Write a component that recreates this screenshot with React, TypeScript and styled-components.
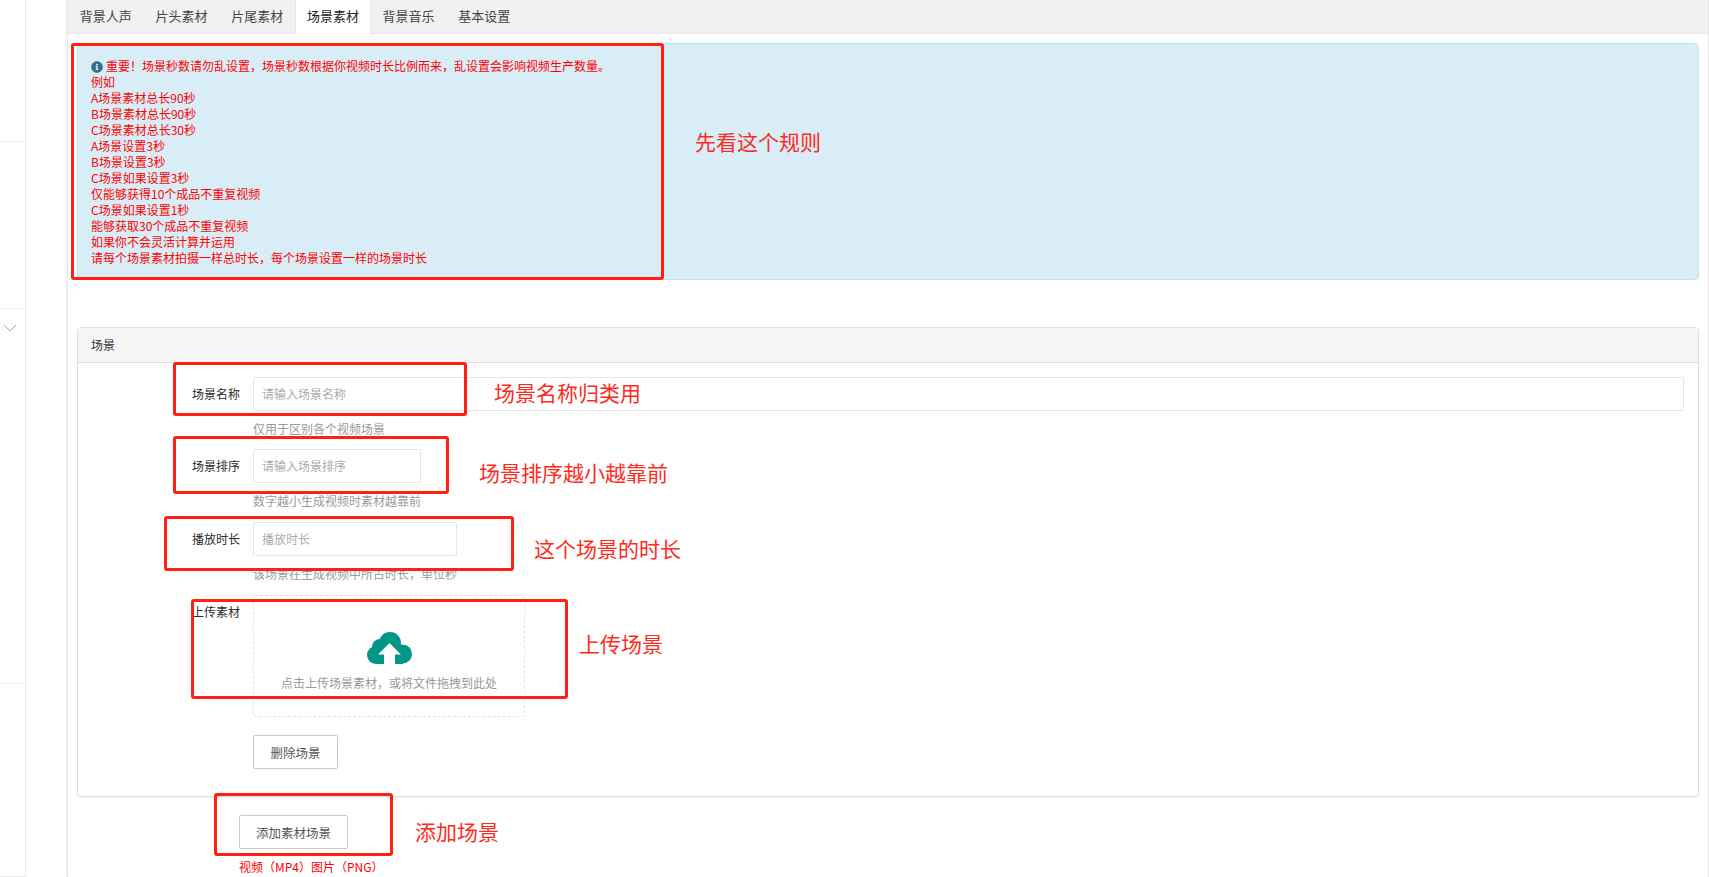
import React from "react";
import styled, { createGlobalStyle } from "styled-components";
import { FaInfoCircle } from "react-icons/fa";

const GlobalStyle = createGlobalStyle`
  html, body {
    margin: 0;
    padding: 0;
    height: 100%;
    overflow: hidden;
    background: #fff;
    font-family: "Noto Sans CJK SC", "Liberation Sans", sans-serif;
    font-size: 12px;
    color: #333;
  }
  * {
    box-sizing: border-box;
  }
`;

const Page = styled.div`
  position: relative;
  display: flex;
  width: 1709px;
  height: 877px;
  overflow: hidden;
`;

const SideRail = styled.div`
  display: flex;
  flex-direction: column;
  width: 26px;
  flex-shrink: 0;
  border-right: 1px solid #e8e8e8;
`;

const RailSection = styled.div<{ $height?: number }>`
  display: flex;
  justify-content: flex-start;
  padding-left: 3px;
  height: ${(p) => (p.$height ? `${p.$height}px` : "auto")};
  flex: ${(p) => (p.$height ? "none" : "1")};
  border-bottom: 1px solid #ececec;
  color: #aaa;
`;

const Gutter = styled.div`
  width: 41px;
  flex-shrink: 0;
`;

const Main = styled.div`
  flex: 1;
  min-width: 0;
  border-left: 1px solid #e6e6e6;
  border-right: 1px solid #e6e6e6;
  box-shadow: -1px 0 2px rgba(0, 0, 0, 0.05);
`;

const TabBar = styled.div`
  display: flex;
  height: 34px;
  background: #f1f1f1;
  border-bottom: 1px solid #e6e6e6;
`;

const Tab = styled.div<{ $active?: boolean }>`
  width: 75.7px;
  height: ${(p) => (p.$active ? "34px" : "33px")};
  line-height: 32px;
  text-align: center;
  font-size: 13px;
  color: ${(p) => (p.$active ? "#222" : "#444")};
  background: ${(p) => (p.$active ? "#fff" : "transparent")};
  border-left: 1px solid ${(p) => (p.$active ? "#e6e6e6" : "transparent")};
  border-right: 1px solid ${(p) => (p.$active ? "#e6e6e6" : "transparent")};
`;

const Content = styled.div`
  padding: 9px 9px 0 9px;
`;

const Alert = styled.div`
  height: 237px;
  padding: 14px 13px;
  margin-bottom: 47px;
  background: #d9edf7;
  border: 1px solid #bce8f1;
  border-radius: 4px;
  color: #f00;
  line-height: 16px;
  font-size: 12px;
`;

const InfoIcon = styled(FaInfoCircle)`
  width: 12px;
  height: 12px;
  margin-right: 3px;
  vertical-align: -2px;
  color: #31708f;
`;

const Panel = styled.div`
  height: 470px;
  border: 1px solid #ddd;
  border-radius: 4px;
  box-shadow: 0 1px 1px rgba(0, 0, 0, 0.05);
`;

const PanelHeader = styled.div`
  height: 35px;
  padding: 0 13px;
  line-height: 33px;
  background: #f5f5f5;
  border-bottom: 1px solid #ddd;
  color: #333;
`;

const PanelBody = styled.div`
  display: flex;
  flex-direction: column;
  padding: 14px 14px 0 0;
`;

const FormRow = styled.div<{ $gap?: number }>`
  display: grid;
  grid-template-columns: 162px 1fr;
  column-gap: 13px;
  margin-bottom: ${(p) => p.$gap ?? 12}px;
`;

const Label = styled.div`
  line-height: 34px;
  text-align: right;
  color: #2a2a2a;
`;

const Input = styled.input<{ $width?: number }>`
  display: block;
  width: ${(p) => (p.$width ? `${p.$width}px` : "100%")};
  height: 34px;
  padding: 0 8px 2px;
  border: 1px solid #e6e6e6;
  border-radius: 2px;
  outline: none;
  font-family: inherit;
  font-size: 12px;
  &::placeholder {
    color: #aaa;
  }
`;

const Help = styled.div`
  margin-top: 9px;
  line-height: 18px;
  color: #999;
`;

const UploadArea = styled.div`
  display: flex;
  flex-direction: column;
  align-items: center;
  width: 272px;
  height: 122px;
  padding-top: 36px;
  border: 1px dashed #e2e2e2;
  border-radius: 2px;
  color: #999;
`;

const UploadText = styled.div`
  margin-top: 9px;
  line-height: 18px;
`;

const Button = styled.button<{ $width: number }>`
  display: block;
  width: ${(p) => p.$width}px;
  height: 34px;
  padding: 0;
  background: #fff;
  border: 1px solid #c9c9c9;
  border-radius: 2px;
  font-family: inherit;
  font-size: 12.5px;
  color: #555;
`;

const Footer = styled.div`
  margin: 18px 0 0 162px;
`;

const Caption = styled.div`
  margin-top: 9px;
  line-height: 18px;
  color: #f00;
`;

const RedBox = styled.div<{ $x: number; $y: number; $w: number; $h: number }>`
  position: absolute;
  left: ${(p) => p.$x}px;
  top: ${(p) => p.$y}px;
  width: ${(p) => p.$w}px;
  height: ${(p) => p.$h}px;
  border: 3px solid #ff2013;
  border-radius: 3px;
  pointer-events: none;
`;

const Note = styled.div<{ $x: number; $y: number }>`
  position: absolute;
  left: ${(p) => p.$x}px;
  top: ${(p) => p.$y}px;
  font-size: 21px;
  line-height: 30px;
  color: #ff2a1c;
  white-space: nowrap;
`;

const tabs = ["背景人声", "片头素材", "片尾素材", "场景素材", "背景音乐", "基本设置"];

const ruleLines = [
  "例如",
  "A场景素材总长90秒",
  "B场景素材总长90秒",
  "C场景素材总长30秒",
  "A场景设置3秒",
  "B场景设置3秒",
  "C场景如果设置3秒",
  "仅能够获得10个成品不重复视频",
  "C场景如果设置1秒",
  "能够获取30个成品不重复视频",
  "如果你不会灵活计算并运用",
  "请每个场景素材拍摄一样总时长，每个场景设置一样的场景时长",
];

const redBoxes = [
  { x: 71, y: 43, w: 593, h: 237 },
  { x: 173, y: 362, w: 294, h: 54 },
  { x: 173, y: 436, w: 276, h: 58 },
  { x: 164, y: 516, w: 350, h: 55 },
  { x: 191, y: 599, w: 377, h: 100 },
  { x: 214, y: 793, w: 179, h: 63 },
];

const notes = [
  { x: 695, y: 126, text: "先看这个规则" },
  { x: 494, y: 377, text: "场景名称归类用" },
  { x: 479, y: 457, text: "场景排序越小越靠前" },
  { x: 534, y: 533, text: "这个场景的时长" },
  { x: 579, y: 628, text: "上传场景" },
  { x: 415, y: 816, text: "添加场景" },
];

function Chevron() {
  return (
    <svg width="14" height="8" viewBox="0 0 14 8" style={{ marginTop: 15 }}>
      <path d="M1 1l6 6 6-6" fill="none" stroke="#aaa" strokeWidth="1" />
    </svg>
  );
}

function CloudIcon() {
  return (
    <svg width="45" height="33" viewBox="0 0 45 33">
      <g fill="#009688">
        <circle cx="9" cy="23" r="9" />
        <circle cx="13" cy="15" r="8" />
        <circle cx="23" cy="11" r="11" />
        <circle cx="35.5" cy="22" r="9.5" />
        <rect x="8" y="18" width="28" height="14" />
      </g>
      <path d="M22.5 11L34 22.5h-6V33H17V22.5h-6z" fill="#fff" />
    </svg>
  );
}

export default function App() {
  return (
    <Page>
      <GlobalStyle />
      <SideRail>
        <RailSection $height={142} />
        <RailSection $height={167} />
        <RailSection $height={375}>
          <Chevron />
        </RailSection>
        <RailSection />
      </SideRail>
      <Gutter />
      <Main>
        <TabBar>
          {tabs.map((t) => (
            <Tab key={t} $active={t === "场景素材"}>
              {t}
            </Tab>
          ))}
        </TabBar>
        <Content>
          <Alert>
            <div>
              <InfoIcon />
              重要！场景秒数请勿乱设置，场景秒数根据你视频时长比例而来，乱设置会影响视频生产数量。
            </div>
            {ruleLines.map((line) => (
              <div key={line}>{line}</div>
            ))}
          </Alert>
          <Panel>
            <PanelHeader>场景</PanelHeader>
            <PanelBody>
              <FormRow $gap={11}>
                <Label>场景名称</Label>
                <div>
                  <Input placeholder="请输入场景名称" />
                  <Help>仅用于区别各个视频场景</Help>
                </div>
              </FormRow>
              <FormRow>
                <Label>场景排序</Label>
                <div>
                  <Input $width={168} placeholder="请输入场景排序" />
                  <Help>数字越小生成视频时素材越靠前</Help>
                </div>
              </FormRow>
              <FormRow>
                <Label>播放时长</Label>
                <div>
                  <Input $width={204} placeholder="播放时长" />
                  <Help>该场景在生成视频中所占时长，单位秒</Help>
                </div>
              </FormRow>
              <FormRow $gap={18}>
                <Label>上传素材</Label>
                <UploadArea>
                  <CloudIcon />
                  <UploadText>点击上传场景素材，或将文件拖拽到此处</UploadText>
                </UploadArea>
              </FormRow>
              <FormRow $gap={0}>
                <div />
                <Button $width={85}>删除场景</Button>
              </FormRow>
            </PanelBody>
          </Panel>
          <Footer>
            <Button $width={109}>添加素材场景</Button>
            <Caption>视频（MP4）图片（PNG）</Caption>
          </Footer>
        </Content>
      </Main>
      {redBoxes.map((b) => (
        <RedBox key={`${b.x}-${b.y}`} $x={b.x} $y={b.y} $w={b.w} $h={b.h} />
      ))}
      {notes.map((n) => (
        <Note key={n.text} $x={n.x} $y={n.y}>
          {n.text}
        </Note>
      ))}
    </Page>
  );
}
